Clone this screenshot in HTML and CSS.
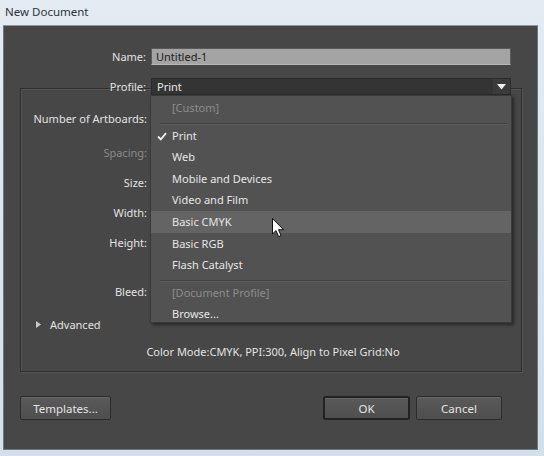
FILE: index.html
```html
<!DOCTYPE html>
<html>
<head>
<meta charset="utf-8">
<link rel="stylesheet" href="styles.css">
</head>
<body>
<div class="window">
  <div class="titlebar">New Document</div>
  <div class="client">
    <div class="row name-row">
      <span class="lbl">Name:</span>
      <div class="input">Untitled-1</div>
    </div>
    <div class="row profile-row">
      <span class="lbl">Profile:</span>
      <div class="select">
        <span class="select-text">Print</span>
        <span class="arrow"><svg width="9" height="7" viewBox="0 0 9 7"><path d="M0 1 H9 L4.5 6.5 Z" fill="#f2f2f2"/></svg></span>
        <ul class="menu">
          <li class="item disabled">[Custom]</li>
          <li class="sep"></li>
          <li class="item checked"><svg class="check" width="10" height="9" viewBox="0 0 10 9"><path d="M1 4.5 L3.8 7.3 L9 1.2" fill="none" stroke="#f0f0f0" stroke-width="1.8"/></svg>Print</li>
          <li class="item">Web</li>
          <li class="item">Mobile and Devices</li>
          <li class="item">Video and Film</li>
          <li class="item hover">Basic CMYK</li>
          <li class="item">Basic RGB</li>
          <li class="item">Flash Catalyst</li>
          <li class="sep"></li>
          <li class="item disabled">[Document Profile]</li>
          <li class="item">Browse...</li>
        </ul>
      </div>
    </div>
    <div class="group">
      <div class="grow r-artboards"><span class="glbl">Number of Artboards:</span></div>
      <div class="grow r-spacing"><span class="glbl dim">Spacing:</span></div>
      <div class="grow r-size"><span class="glbl">Size:</span></div>
      <div class="grow r-width"><span class="glbl">Width:</span></div>
      <div class="grow r-height"><span class="glbl">Height:</span></div>
      <div class="grow r-bleed"><span class="glbl">Bleed:</span></div>
      <div class="advanced"><svg width="5" height="7" viewBox="0 0 5 7"><path d="M0 0 L5 3.5 L0 7 Z" fill="#c8c8c8"/></svg><span>Advanced</span></div>
      <div class="summary">Color Mode:CMYK, PPI:300, Align to Pixel Grid:No</div>
    </div>
    <div class="buttons">
      <button class="btn btn-templates">Templates...</button>
      <div class="spacer"></div>
      <button class="btn btn-ok">OK</button>
      <button class="btn btn-cancel">Cancel</button>
    </div>
  </div>
  <svg class="cursor" width="13" height="20" viewBox="0 0 13 20"><path d="M0.5 0.5 L0.5 16 L4 12.6 L6.6 18.6 L9 17.6 L6.5 11.7 L11.5 11.7 Z" fill="#ffffff" stroke="#111" stroke-width="1" stroke-linejoin="round"/></svg>
</div>
</body>
</html>
```
FILE: styles.css
```css
* { box-sizing: border-box; }
html, body { margin: 0; padding: 0; }
body {
  width: 544px;
  height: 456px;
  overflow: hidden;
  font-family: "Noto Sans", "Open Sans", sans-serif;
  font-size: 11px;
}
.window {
  position: relative;
  width: 544px;
  height: 456px;
  background: linear-gradient(180deg, #e4ebf2 0%, #dde6ef 40%, #d3dfea 100%);
  display: flex;
  flex-direction: column;
}
.titlebar {
  height: 25px;
  padding: 3px 0 0 5px;
  color: #2b3440;
  font-size: 11.5px;
  line-height: 17px;
}
.client {
  margin: 0 6px 0 3px;
  height: 425px;
  background: #474747;
  border: 1px solid #6d7680;
  border-top-color: #8d98a4;
  display: flex;
  flex-direction: column;
}
.row {
  display: flex;
  align-items: center;
  gap: 5px;
  height: 17px;
}
.lbl {
  width: 142px;
  text-align: right;
  color: #e2e2e2;
  line-height: 17px;
}
.name-row { margin-top: 22px; }
.profile-row {
  margin-top: 13px;
  position: relative;
  z-index: 2;
}
.input {
  width: 360px;
  height: 17px;
  background: #a4a4a4;
  border: 1px solid #5a5a5a;
  border-bottom-color: #b8b8b8;
  color: #1c1c1c;
  line-height: 15px;
  padding-left: 4px;
}
.select {
  position: relative;
  width: 360px;
  height: 17px;
  background: #343434;
  border: 1px solid #2b2b2b;
  display: flex;
  align-items: center;
  justify-content: space-between;
  color: #e8e8e8;
}
.select-text { padding-left: 5px; line-height: 15px; }
.arrow {
  width: 17px;
  height: 15px;
  background: #3b3b3b;
  display: flex;
  align-items: center;
  justify-content: center;
}
.menu {
  position: absolute;
  top: 16px;
  left: -2px;
  width: 362px;
  height: 228px;
  margin: 0;
  padding: 1px 0 0;
  list-style: none;
  background: #525252;
  border: 1px solid #3a3a3a;
  box-shadow: 2px 2px 3px rgba(0, 0, 0, 0.45);
}
.item {
  position: relative;
  height: 21.6px;
  line-height: 21.6px;
  padding-left: 21px;
  color: #e6e6e6;
}
.item.disabled { color: #8c8c8c; }
.item.hover { background: #646464; }
.check {
  position: absolute;
  left: 6px;
  top: 7px;
}
.sep {
  height: 5px;
  margin: 0 4px 0 9px;
  border-bottom: 1px solid #434343;
  box-shadow: 0 1px 0 #5c5c5c;
  margin-bottom: 1px;
}
.group {
  position: relative;
  z-index: 1;
  margin: -7px 0 0 16px;
  width: 502px;
  height: 284px;
  border: 1px solid #2f2f2f;
  box-shadow: inset 1px 1px 0 #555, 1px 1px 0 #555;
  display: flex;
  flex-direction: column;
}
.grow {
  height: 22px;
  display: flex;
  align-items: center;
}
.glbl {
  width: 126px;
  text-align: right;
  color: #e2e2e2;
}
.glbl.dim { color: #8a8a8a; }
.r-artboards { margin-top: 18px; }
.r-spacing { margin-top: 12px; }
.r-size { margin-top: 8px; }
.r-width { margin-top: 8px; }
.r-height { margin-top: 8px; }
.r-bleed { margin-top: 27px; }
.advanced {
  margin-top: 11px;
  height: 22px;
  display: flex;
  align-items: center;
  gap: 9px;
  padding-left: 15px;
  color: #e2e2e2;
}
.summary {
  margin-top: 6px;
  height: 22px;
  line-height: 22px;
  text-align: center;
  color: #e2e2e2;
  padding-left: 4px;
}
.buttons {
  display: flex;
  margin: 24px 35px 0 16px;
  gap: 6px;
}
.spacer { flex: 1; }
.btn {
  height: 24px;
  font-family: inherit;
  font-size: 11.5px;
  color: #e4e4e4;
  background: linear-gradient(180deg, #5a5a5a 0%, #4e4e4e 100%);
  border: 1px solid #2c2c2c;
  box-shadow: inset 0 1px 0 #666;
  border-radius: 2px;
  padding: 0;
}
.btn-templates { width: 91px; }
.btn-ok { width: 87px; border: 2px solid #222; }
.btn-cancel { width: 86px; }
.cursor {
  position: absolute;
  left: 272px;
  top: 218px;
  z-index: 5;
}
```
